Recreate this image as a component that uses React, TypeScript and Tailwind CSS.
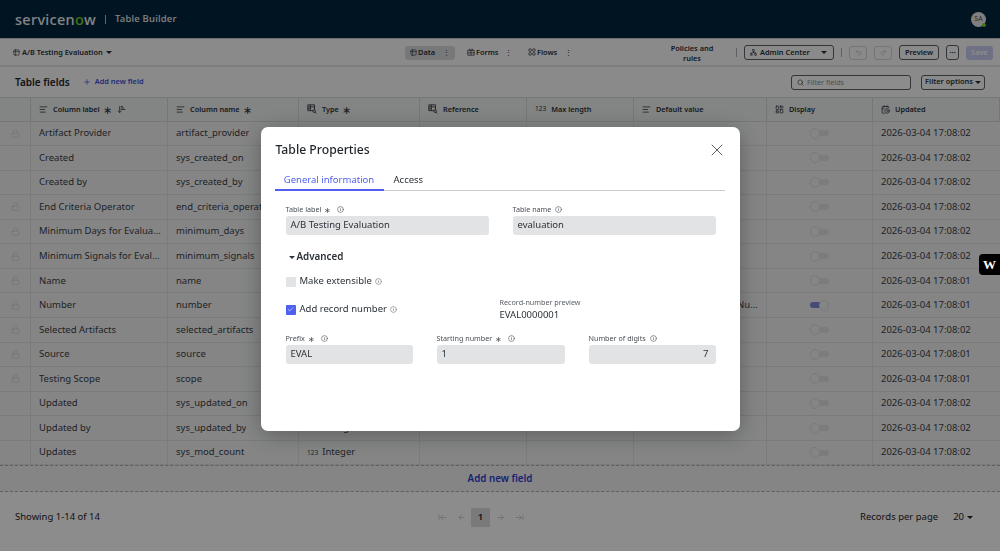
import React from 'react'
import { AlignLeft, ArrowDownNarrowWide, ArrowLeft, ArrowRight, ArrowLeftToLine, ArrowRightToLine, CalendarClock, Info, Lock, MoreHorizontal, Network, Plus, Redo2, Search, Table2, Undo2, X, Check, LayoutDashboard } from 'lucide-react'

const colTemplate = 'grid grid-cols-[31px_137px_131px_121px_107px_107px_133px_106px_127px]'

const rows = [
    { label: 'Artifact Provider', name: 'artifact_provider', type: 'String', lock: true, time: '17:08:02' },
    { label: 'Created', name: 'sys_created_on', type: 'Date/Time', lock: false, time: '17:08:02' },
    { label: 'Created by', name: 'sys_created_by', type: 'String', lock: false, time: '17:08:02' },
    { label: 'End Criteria Operator', name: 'end_criteria_operator', type: 'Choice', lock: true, time: '17:08:02' },
    { label: 'Minimum Days for Evaluation', name: 'minimum_days', type: 'Integer', lock: true, time: '17:08:02' },
    { label: 'Minimum Signals for Evaluation', name: 'minimum_signals', type: 'Integer', lock: true, time: '17:08:02' },
    { label: 'Name', name: 'name', type: 'String', lock: true, time: '17:08:01' },
    { label: 'Number', name: 'number', type: 'String', lock: true, time: '17:08:01', def: 'javascript:global.getNumberPadded()', on: true },
    { label: 'Selected Artifacts', name: 'selected_artifacts', type: 'List', lock: true, time: '17:08:02' },
    { label: 'Source', name: 'source', type: 'String', lock: true, time: '17:08:01' },
    { label: 'Testing Scope', name: 'scope', type: 'Choice', lock: true, time: '17:08:01' },
    { label: 'Updated', name: 'sys_updated_on', type: 'Date/Time', lock: false, time: '17:08:02' },
    { label: 'Updated by', name: 'sys_updated_by', type: 'String', lock: false, time: '17:08:02', max: '40' },
    { label: 'Updates', name: 'sys_mod_count', type: 'Integer', lock: false, time: '17:08:02' },
]

function TableSearchIcon() {
    return (
        <svg width="10" height="10" viewBox="0 0 12 12" fill="none" stroke="currentColor" strokeWidth="1">
            <path d="M1 1h8v7H1zM1 3.5h8M4 1v7M1 5.8h3" />
            <circle cx="8.5" cy="8.5" r="1.6" fill="#eef0f1" />
            <path d="M9.7 9.7l1.6 1.6" />
        </svg>
    )
}

function FormsIcon() {
    return (
        <svg width="8" height="8" viewBox="0 0 10 10" fill="none" stroke="currentColor" strokeWidth="0.9">
            <path d="M1 3h8v6H1zM3 1v2M7 1v2M5 1v8M1 6h8" />
        </svg>
    )
}

function FlowsIcon() {
    return (
        <svg width="8" height="8" viewBox="0 0 10 10" fill="none" stroke="currentColor" strokeWidth="0.9">
            <circle cx="2.6" cy="2.6" r="1.7" />
            <circle cx="7.4" cy="2.6" r="1.7" />
            <circle cx="2.6" cy="7.4" r="1.7" />
            <circle cx="7.4" cy="7.4" r="1.7" />
        </svg>
    )
}

function Caret() {
    return <span className="block border-x-[3px] border-t-[3px] border-x-transparent border-t-current"></span>
}

function Toggle({ on }: { on?: boolean }) {
    return (
        <div className="relative w-[19px] h-[6px] rounded-full">
            <div className={`absolute inset-0 rounded-full ${on ? 'bg-[#8088d8]' : 'bg-[#e0e2e4]'}`}></div>
            <div className={`absolute top-[-2.5px] w-[10px] h-[11px] rounded-full bg-[#f2f3f4] border border-[#dcdee0] ${on ? 'right-0' : 'left-0'}`}></div>
        </div>
    )
}

function HeadCell({ icon, label, star, sort }: { icon: React.ReactNode; label: string; star?: boolean; sort?: boolean }) {
    return (
        <div className="flex items-center gap-[5px] pl-[8px] border-r border-[#d5d8db] text-[7.3px] font-semibold text-[#2c3238] whitespace-nowrap">
            {icon}
            <span>{label}</span>
            {star && <span className="text-[11px] leading-none font-normal -ml-[2px]">∗</span>}
            {sort && <ArrowDownNarrowWide size={9} />}
        </div>
    )
}

function FieldLabel({ text, required }: { text: string; required?: boolean }) {
    return (
        <div className="flex items-center h-[14px] pt-px text-[7.2px] text-[#4b5157]">
            <span>{text}</span>
            {required && <span className="ml-[3px] text-[8px]">∗</span>}
            <Info size={7} className={required ? 'ml-[6px]' : 'ml-[4px]'} />
        </div>
    )
}

function TextBox({ value, right }: { value: string; right?: boolean }) {
    return (
        <div className={`h-[19px] rounded-[3px] bg-[#e1e3e5] flex items-center text-[9.5px] text-[#2c3238] ${right ? 'justify-end pr-[7px]' : 'pl-[5px]'}`}>
            {value}
        </div>
    )
}

export default function App() {
    return (
        <div className="relative w-[1000px] h-[551px] overflow-hidden bg-white text-[#2c3238] font-['Noto_Sans',sans-serif]">
            {/* Top bar */}
            <div className="h-[38px] bg-[#02263f] flex items-center pl-[15px] pr-[14px] text-[#f0f2f3]">
                <div className="w-[80px] text-[14.5px] font-medium leading-none tracking-[0.3px]">
                    servicen<span className="text-[#7ed321]">o</span>w
                </div>
                <div className="w-px h-[9px] bg-[#b8bec3] ml-[10px] mr-[9px]"></div>
                <div className="text-[9.5px] font-medium tracking-[0.2px]">Table Builder</div>
                <div className="ml-auto relative w-[15px] h-[15px] rounded-full bg-[#e8e8e8] text-[#555] text-[7px] flex items-center justify-center">
                    SA
                    <div className="absolute right-0 bottom-0 w-[4px] h-[4px] rounded-full bg-[#7ed321]"></div>
                </div>
            </div>

            {/* Toolbar */}
            <div className="h-[29px] pt-px border-t border-b-2 border-t-[#c8ccd0] border-b-[#e4e6e8] bg-[#fbfbfc] flex items-center pl-[13px] text-[7.4px] font-semibold whitespace-nowrap">
                <div className="w-[392px] flex items-center">
                    <Table2 size={7} />
                    <span className="ml-[2px]">A/B Testing Evaluation</span>
                    <span className="ml-[3px]"><Caret /></span>
                </div>
                <div className="w-[50px] h-[14px] rounded-[3px] bg-[#d8dbde] flex items-center pl-[5px]">
                    <Table2 size={7} />
                    <span className="ml-[1px]">Data</span>
                    <span className="ml-auto mr-[5px] font-normal">⋮</span>
                </div>
                <div className="ml-[12px] w-[45px] flex items-center">
                    <FormsIcon />
                    <span className="ml-[1px]">Forms</span>
                    <span className="ml-auto font-normal">⋮</span>
                </div>
                <div className="ml-[16px] w-[44px] flex items-center">
                    <FlowsIcon />
                    <span className="ml-[1px]">Flows</span>
                    <span className="ml-auto font-normal">⋮</span>
                </div>

                <div className="ml-[95px] w-[50px] text-center leading-[10px] whitespace-normal">Policies and rules</div>
                <div className="ml-[19px] w-px h-[9px] bg-[#aab0b5]"></div>
                <div className="ml-[7px] w-[90px] h-[15px] rounded-[3px] border border-[#5c6268] flex items-center pl-[5px]">
                    <Network size={7} />
                    <span className="ml-[3px]">Admin Center</span>
                    <span className="ml-auto mr-[6px]"><Caret /></span>
                </div>
                <div className="ml-[7px] w-px h-[9px] bg-[#aab0b5]"></div>
                <div className="ml-[7px] w-[18px] h-[14px] rounded-[3px] border border-[#d3d6d9] flex items-center justify-center text-[#b4b8bc]"><Undo2 size={7} /></div>
                <div className="ml-[7px] w-[18px] h-[14px] rounded-[3px] border border-[#d3d6d9] flex items-center justify-center text-[#b4b8bc]"><Redo2 size={7} /></div>
                <div className="ml-[7px] w-[40px] h-[15px] rounded-[3px] border border-[#5c6268] flex items-center justify-center">Preview</div>
                <div className="ml-[7px] w-[13px] h-[15px] rounded-[3px] border border-[#5c6268] flex items-center justify-center"><MoreHorizontal size={7} /></div>
                <div className="ml-[7px] w-[27px] h-[14px] rounded-[3px] bg-[#c9cdf5] text-white flex items-center justify-center">Save</div>
            </div>

            {/* Table title row */}
            <div className="h-[30px] bg-[#fbfbfc] flex items-center pl-[15px] pr-[15px] whitespace-nowrap">
                <div className="text-[10px] font-semibold text-[#1f252a]">Table fields</div>
                <Plus size={8} className="ml-[13px] text-[#3f4fd8]" />
                <div className="ml-[4px] text-[7.4px] font-semibold text-[#3f4fd8]">Add new field</div>
                <div className="ml-auto w-[120px] h-[15px] rounded-[3px] border border-[#5c6268] bg-white flex items-center pl-[5px] text-[7.2px] text-[#8a9096]">
                    <Search size={7} className="text-[#2c3238]" />
                    <span className="ml-[3px]">Filter fields</span>
                </div>
                <div className="ml-[10px] w-[64px] h-[15px] rounded-[3px] border border-[#5c6268] flex items-center justify-center text-[7.4px] font-semibold">
                    Filter options
                    <span className="ml-[2px]"><Caret /></span>
                </div>
            </div>

            {/* Table */}
            <div className={`${colTemplate} h-[24.5px] bg-[#eef0f1] border-y border-[#d5d8db]`}>
                <div className="border-r border-[#d5d8db]"></div>
                <HeadCell icon={<AlignLeft size={9} />} label="Column label" star sort />
                <HeadCell icon={<AlignLeft size={9} />} label="Column name" star />
                <HeadCell icon={<TableSearchIcon />} label="Type" star />
                <HeadCell icon={<TableSearchIcon />} label="Reference" />
                <HeadCell icon={<span className="text-[6.5px] font-normal">123</span>} label="Max length" />
                <HeadCell icon={<AlignLeft size={9} />} label="Default value" />
                <HeadCell icon={<LayoutDashboard size={9} />} label="Display" />
                <HeadCell icon={<CalendarClock size={9} />} label="Updated" />
            </div>
            {rows.map((row) => (
                <div key={row.name} className={`${colTemplate} h-[24.57px] bg-[#f2f3f4] border-b border-[#dfe1e3] text-[9.5px] text-[#3a4046]`}>
                    <div className="flex items-center justify-center border-r border-[#dfe1e3] text-[#ced1d4]">
                        {row.lock && <Lock size={9} />}
                    </div>
                    <div className="flex items-center pl-[8px] pr-[6px] border-r border-[#dfe1e3] min-w-0"><span className="truncate">{row.label}</span></div>
                    <div className="flex items-center pl-[8px] border-r border-[#dfe1e3] min-w-0"><span className="truncate">{row.name}</span></div>
                    <div className="flex items-center gap-[4px] pl-[8px] border-r border-[#dfe1e3]">
                        <span className="text-[6.5px]">123</span>
                        <span>{row.type}</span>
                    </div>
                    <div className="border-r border-[#dfe1e3]"></div>
                    <div className="flex items-center justify-end pr-[6px] border-r border-[#dfe1e3]">{row.max}</div>
                    <div className="flex items-center pl-[13px] pr-[3px] border-r border-[#dfe1e3] min-w-0"><span className="truncate">{row.def}</span></div>
                    <div className="flex items-center justify-center border-r border-[#dfe1e3]"><Toggle on={row.on} /></div>
                    <div className="flex items-center pl-[8px]">2026-03-04 {row.time}</div>
                </div>
            ))}
            <div className="h-[27px] bg-[#f2f3f4] border-y border-dashed border-[#a9adb1] flex items-center justify-center text-[9.8px] font-semibold text-[#2f3fce]">
                Add new field
            </div>

            {/* Footer */}
            <div className="h-[50px] flex items-center px-[15px] text-[9.5px] text-[#1f252a] relative">
                <span>Showing 1-14 of 14</span>
                <div className="absolute left-[438px] flex items-center text-[#c3c6c9]">
                    <ArrowLeftToLine size={9} />
                    <ArrowLeft size={9} className="ml-[10px]" />
                    <div className="ml-[5px] w-[19px] h-[19px] bg-[#dcdee0] text-[#1f252a] font-semibold flex items-center justify-center">1</div>
                    <ArrowRight size={9} className="ml-[6px]" />
                    <ArrowRightToLine size={9} className="ml-[10px]" />
                </div>
                <span className="ml-auto">Records per page</span>
                <span className="ml-[15px]">20</span>
                <span className="ml-[3px] mr-[12px]"><Caret /></span>
            </div>

            {/* Dimmed backdrop + dialog */}
            <div className="absolute inset-0 bg-black/45 backdrop-blur-[0.6px] flex justify-center pt-[127px]">
                <div className="w-[479px] h-[304px] rounded-[7px] bg-white shadow-[0_4px_24px_rgba(0,0,0,0.3)] pl-[14px] pr-[15px] pt-[14px]">
                    <div className="flex items-center justify-between h-[18px] pl-px">
                        <div className="text-[12.2px] font-medium text-[#1f252a]">Table Properties</div>
                        <X size={20} strokeWidth={1} className="text-[#3a4046] -mr-[2px]" />
                    </div>
                    <div className="mt-[12px] h-[20px] border-b border-[#c9ccd0] flex text-[9.5px] leading-[18px] whitespace-nowrap">
                        <div className="w-[109px] h-[20px] border-b-2 border-[#4f5ff0] text-[#4f5ff0] text-center">General information</div>
                        <div className="ml-[10px] text-[#2c3238]">Access</div>
                    </div>
                    <div className="pl-[11px] pr-[10px]">
                        <div className="mt-[11px] grid grid-cols-[203px_203px] gap-x-[24px]">
                            <div>
                                <FieldLabel text="Table label" required />
                                <TextBox value="A/B Testing Evaluation" />
                            </div>
                            <div>
                                <FieldLabel text="Table name" />
                                <TextBox value="evaluation" />
                            </div>
                        </div>
                        <div className="mt-[15px] ml-[3px] flex items-center text-[9.8px] font-semibold text-[#2c3238] h-[15px]">
                            <span className="mr-[2px]"><Caret /></span>
                            Advanced
                        </div>
                        <div className="mt-[9px] h-[15px] flex items-center text-[9.5px] text-[#2c3238]">
                            <div className="w-[10px] h-[10px] rounded-[1px] bg-[#e1e3e5]"></div>
                            <span className="ml-[4px]">Make extensible</span>
                            <Info size={7} className="ml-[3px] text-[#6a7076]" />
                        </div>
                        <div className="mt-[7px] flex items-start">
                            <div className="w-[214px] h-[21px] flex items-center text-[9.5px] text-[#2c3238] pt-[6px]">
                                <div className="w-[10px] h-[10px] rounded-[1px] bg-[#4f5ff0] flex items-center justify-center text-white"><Check size={7} /></div>
                                <span className="ml-[4px]">Add record number</span>
                                <Info size={7} className="ml-[3px] text-[#6a7076]" />
                            </div>
                            <div>
                                <div className="text-[7.2px] text-[#5a6066] leading-[12px]">Record-number preview</div>
                                <div className="text-[9.5px] text-[#2c3238] leading-[13px]">EVAL0000001</div>
                            </div>
                        </div>
                        <div className="mt-[10px] grid grid-cols-[127px_128px_127px] gap-x-[24px]">
                            <div>
                                <FieldLabel text="Prefix" required />
                                <TextBox value="EVAL" />
                            </div>
                            <div>
                                <FieldLabel text="Starting number" required />
                                <TextBox value="1" />
                            </div>
                            <div>
                                <FieldLabel text="Number of digits" />
                                <TextBox value="7" right />
                            </div>
                        </div>
                    </div>
                </div>
            </div>

            {/* Floating badge, sits over the backdrop */}
            <div className="absolute right-0 top-[254px] w-[21px] h-[21px] rounded-l-[4px] bg-black text-white flex items-center justify-center font-['Liberation_Serif',serif] font-bold text-[13px]">
                W
            </div>
        </div>
    )
}
